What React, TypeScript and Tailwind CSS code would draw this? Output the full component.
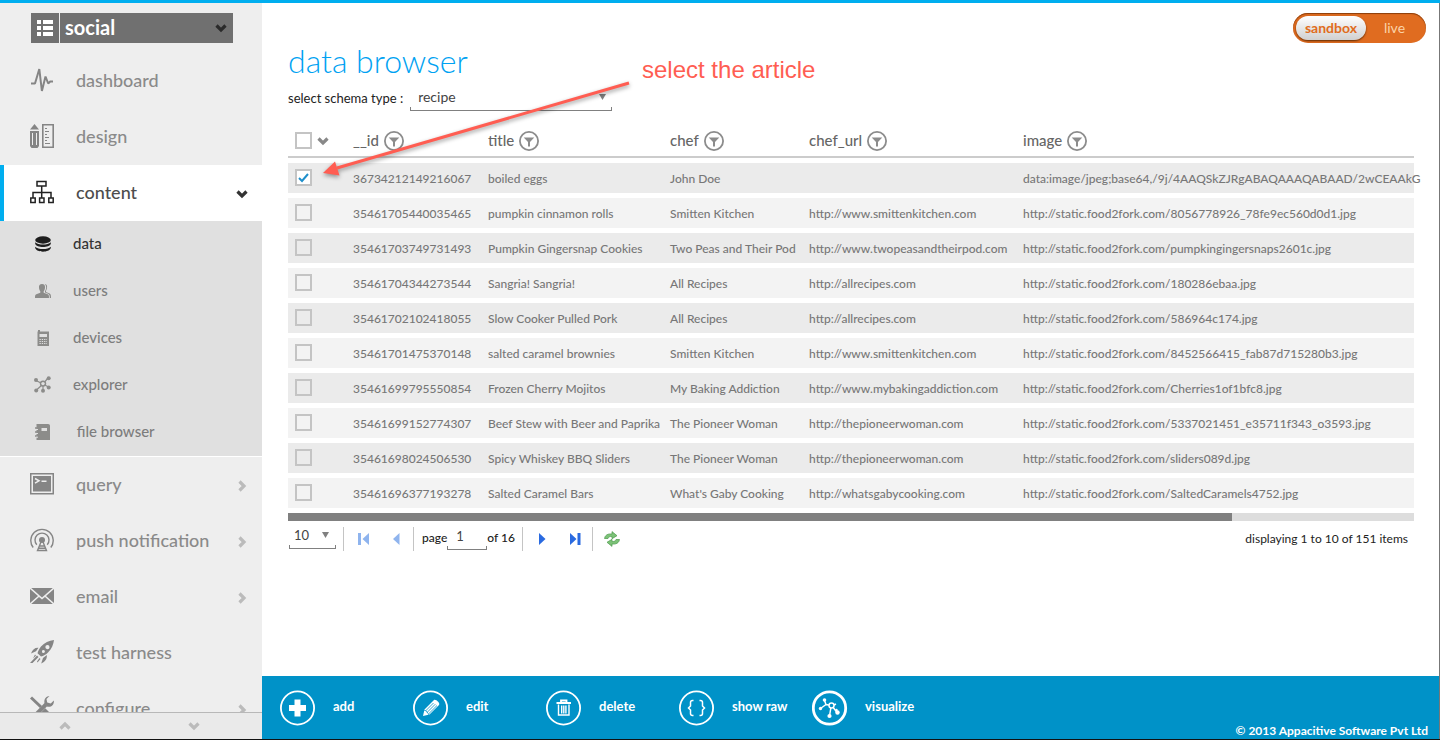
import { useState } from "react";
import type { ReactNode } from "react";
import clsx from "clsx";

interface Recipe {
    id: string;
    title: string;
    chef: string;
    chefUrl: string;
    image: string;
}

const RECIPES: Recipe[] = [
    { id: "36734212149216067", title: "boiled eggs", chef: "John Doe", chefUrl: "", image: "data:image/jpeg;base64,/9j/4AAQSkZJRgABAQAAAQABAAD/2wCEAAkG" },
    { id: "35461705440035465", title: "pumpkin cinnamon rolls", chef: "Smitten Kitchen", chefUrl: "http://www.smittenkitchen.com", image: "http://static.food2fork.com/8056778926_78fe9ec560d0d1.jpg" },
    { id: "35461703749731493", title: "Pumpkin Gingersnap Cookies", chef: "Two Peas and Their Pod", chefUrl: "http://www.twopeasandtheirpod.com", image: "http://static.food2fork.com/pumpkingingersnaps2601c.jpg" },
    { id: "35461704344273544", title: "Sangria! Sangria!", chef: "All Recipes", chefUrl: "http://allrecipes.com", image: "http://static.food2fork.com/180286ebaa.jpg" },
    { id: "35461702102418055", title: "Slow Cooker Pulled Pork", chef: "All Recipes", chefUrl: "http://allrecipes.com", image: "http://static.food2fork.com/586964c174.jpg" },
    { id: "35461701475370148", title: "salted caramel brownies", chef: "Smitten Kitchen", chefUrl: "http://www.smittenkitchen.com", image: "http://static.food2fork.com/8452566415_fab87d715280b3.jpg" },
    { id: "35461699795550854", title: "Frozen Cherry Mojitos", chef: "My Baking Addiction", chefUrl: "http://www.mybakingaddiction.com", image: "http://static.food2fork.com/Cherries1of1bfc8.jpg" },
    { id: "35461699152774307", title: "Beef Stew with Beer and Paprika", chef: "The Pioneer Woman", chefUrl: "http://thepioneerwoman.com", image: "http://static.food2fork.com/5337021451_e35711f343_o3593.jpg" },
    { id: "35461698024506530", title: "Spicy Whiskey BBQ Sliders", chef: "The Pioneer Woman", chefUrl: "http://thepioneerwoman.com", image: "http://static.food2fork.com/sliders089d.jpg" },
    { id: "35461696377193278", title: "Salted Caramel Bars", chef: "What's Gaby Cooking", chefUrl: "http://whatsgabycooking.com", image: "http://static.food2fork.com/SaltedCaramels4752.jpg" },
];

const COLUMNS = ["__id", "title", "chef", "chef_url", "image"];

/* ---------- icons ---------- */

function Chevron({ direction, className }: { direction: "up" | "down" | "right"; className?: string }) {
    const d = {
        up: "M1.5 8.5 6 4l4.5 4.5",
        down: "M1.5 3.5 6 8l4.5-4.5",
        right: "M3.5 1.5 8 6l-4.5 4.5",
    }[direction];
    return (
        <svg width="12" height="12" viewBox="0 0 12 12" className={clsx("shrink-0", className)} aria-hidden="true">
            <path d={d} fill="none" stroke="currentColor" strokeWidth="3.2" />
        </svg>
    );
}

const PulseIcon = () => (
    <svg width="24" height="24" viewBox="0 0 24 24" fill="none" stroke="currentColor" strokeWidth="2" strokeLinejoin="bevel">
        <path d="M1 15.500h4L9.300 1l2.600 22 3.600-14.500 2.700 7 2-2H23" />
    </svg>
);

const DesignIcon = () => (
    <svg width="24" height="24" viewBox="0 0 24 24" fill="currentColor">
        <path d="M4.500 0 9 5.500H0z" />
        <path fillRule="evenodd" d="M0 7h9v15l-1.500 2h-6L0 22zM2 9v12h1V9zm4 0v12h1V9z" />
        <path fillRule="evenodd" d="M12 0h12v24H12zm1.600 1.600v20.800h8.800V1.600z" />
        <path d="M15 4h2v1h-2zm0 3h4v1h-4zm0 3h2v1h-2zm0 3h4v1h-4zm0 3h2v1h-2zm0 3h5v1h-5z" />
    </svg>
);

const TreeIcon = () => (
    <svg width="24" height="24" viewBox="0 0 24 24" fill="none" stroke="currentColor" strokeWidth="1.500">
        <path d="M7 1.500h9v4.500H7z" />
        <path d="M11.700 6v12M3 18v-5.500h18V18" />
        <path d="M.8 18h4.400v4.400H.8zm8.800 0H14v4.400H9.600zm9.200 0h4.400v4.400h-4.400z" />
    </svg>
);

const TerminalIcon = () => (
    <svg width="24" height="22" viewBox="0 0 24 22">
        <path fill="none" stroke="currentColor" strokeWidth="1.500" d="M.75.75h22.500v20H.75z" />
        <path fill="currentColor" d="M3 3h18v15.500H3z" />
        <path fill="none" stroke="#eee" strokeWidth="1.500" d="m5 5.500 4 2.300-4 2.300M11.500 8.300h5" />
    </svg>
);

const AntennaIcon = () => (
    <svg width="24" height="24" viewBox="0 0 24 24" fill="none" stroke="currentColor" strokeWidth="1.400">
        <path d="M3.200 19.500a11.200 11.200 0 1 1 17.600 0" />
        <path d="M6.800 16.800a7 7 0 1 1 10.400 0" />
        <circle cx="12" cy="12" r="3" fill="currentColor" stroke="none" />
        <path d="M11 14 7.500 22.500h9L13 14M9.500 18h5M9 20.300h6" />
    </svg>
);

const MailIcon = () => (
    <svg width="24" height="16" viewBox="0 0 24 16" fill="currentColor">
        <path d="M1.200 0h21.600L12 9.600z" />
        <path d="M0 1v14l8-7zM24 1v14l-8-7z" />
        <path d="m9 9-7.800 7h21.600L15 9l-3 2.600z" />
    </svg>
);

const RocketIcon = () => (
    <svg width="24" height="24" viewBox="0 0 24 24" fill="currentColor">
        <path fillRule="evenodd" d="M24 0c-5 .6-9.500 2.500-13 6.500-1.500 1.800-3 4.500-3.500 6.800l3.500 3.300c2.500-.6 5-2 7-4C21.500 9 23.500 4.500 24 0zm-6.500 5a2.100 2.100 0 1 1-.1 4.200 2.100 2.100 0 0 1 .1-4.200zm-4 5a1.500 1.500 0 1 1-.1 3 1.500 1.500 0 0 1 .1-3z" />
        <path d="M8.500 7.800C5 7.500 2.500 9.500 1 13.500l5-2.200zM16.800 15c.4 4-1.500 6.600-5.600 8.500L13 18z" />
        <path d="m7 15.500 1.500 1.500-6 6H0zM5 14.500l1 1-3 3zM9.500 18l1 1-3 3.500-.5-1z" />
    </svg>
);

const ToolsIcon = () => (
    <svg width="24" height="24" viewBox="0 0 24 24">
        <g stroke="currentColor" fill="none">
            <path strokeWidth="3" d="M1 1.500 11 11" />
            <path strokeWidth="5" d="m13.500 14 8 8" />
            <path strokeWidth="4" d="M16 8.500 3 21.500" />
        </g>
        <path fill="currentColor" d="M19.500 0 16.500 3l.7 3.500 3.600.9 3-3c.6 4-2 7-6.300 6.300l-3-3C13.700 3.300 16 .2 19.500 0z" />
    </svg>
);

const DatabaseIcon = () => (
    <svg width="16" height="16" viewBox="0 0 16 16" fill="currentColor">
        <ellipse cx="8" cy="4" rx="7.800" ry="3.700" />
        <path d="M.2 6.200C3 9.300 13 9.300 15.800 6.200v1.600c-1.300 4.400-14.300 4.400-15.600 0z" />
        <path d="M.2 10.700c2.800 3.100 12.800 3.100 15.600 0v1.400c-1.300 4.800-14.300 4.800-15.600 0z" />
    </svg>
);

const UsersIcon = () => (
    <svg width="16" height="14" viewBox="0 0 16 14" fill="currentColor">
        <path d="M7 0c2.300 0 3.300 1.600 3 4-.2 1.600-.8 2.600-1.300 3.300v1.500l4 1.500c1.200.6 1.300 1.700 1.300 3.700H0c0-2 .1-3.100 1.300-3.700l4-1.500V7.300C4.800 6.600 4.200 5.600 4 4 3.700 1.600 4.700 0 7 0z" />
        <path d="M9.800 0c2.200.2 2.500 2 2.200 4-.2 1.300-.7 2.200-1 2.800v1.300l3.700 1.500c1.200.6 1.300 2.200 1.300 4.400h-1.200c0-2.300-.3-3.500-1.600-4.200L10 8.400V7.200c1.700-2.800 1.600-5.200-.2-7.200z" />
    </svg>
);

const PhoneIcon = () => (
    <svg width="12" height="16" viewBox="0 0 12 16">
        <path fill="currentColor" d="M1 0h2v1.500h9V16H.5V1.500H1z" />
        <path fill="#e0e0e0" d="M2.500 4h7.500v3H2.500z" />
        <path stroke="#e0e0e0" strokeWidth="1" strokeDasharray="1.300 1" d="M2.500 9.500H10M2.500 11.500H10M2.500 13.500H10" />
    </svg>
);

const NetworkIcon = () => (
    <svg width="17" height="17" viewBox="0 0 17 17" fill="currentColor">
        <path fill="none" stroke="currentColor" strokeWidth="1.200" d="M2 4.500 9 8l5-6M9 8l5.500 3M9 8v7M9 8l-7 6.500" />
        <circle cx="9" cy="7.600" r="3.200" />
        <circle cx="9" cy="7.600" r="1.700" fill="#e0e0e0" />
        <circle cx="2" cy="4" r="2" />
        <circle cx="14.700" cy="2.200" r="2" />
        <circle cx="14.700" cy="11.500" r="2" />
        <circle cx="9" cy="14.700" r="2" />
        <circle cx="2.200" cy="14.500" r="2" />
    </svg>
);

const NotebookIcon = () => (
    <svg width="16" height="16" viewBox="0 0 16 16">
        <path fill="currentColor" d="M1.500 0H13c1.300 0 2 .8 2 2v14H1.500z" />
        <path stroke="currentColor" strokeWidth="1.500" d="M0 4h3M0 8h3M0 12h3" />
        <path stroke="#e0e0e0" strokeWidth="1" d="M1 5.500h2M1 9.500h2M1 13.200h2" />
        <path fill="#e0e0e0" d="M6.500 4H12v3H6.500z" />
    </svg>
);

const FilterIcon = () => (
    <svg width="20" height="20" viewBox="0 0 20 20">
        <circle cx="10" cy="10" r="9.100" fill="none" stroke="#8c8c8c" strokeWidth="1.800" />
        <path fill="#8c8c8c" d="M4.700 6.500h10.600L11 11v4.500H9V11z" />
    </svg>
);

function CircleIcon({ children, bold }: { children: ReactNode; bold?: boolean }) {
    return (
        <svg width="36" height="36" viewBox="0 0 36 36" fill="none" stroke="#fff" className="shrink-0" aria-hidden="true">
            <circle cx="17.500" cy="18" r={bold ? 16.2 : 16.6} strokeWidth={bold ? 2.8 : 1.8} />
            {children}
        </svg>
    );
}

/* ---------- sidebar ---------- */

interface NavEntry {
    label: string;
    icon: ReactNode;
    chevron?: "down" | "right";
    active?: boolean;
}

const NAV_TOP: NavEntry[] = [
    { label: "dashboard", icon: <PulseIcon /> },
    { label: "design", icon: <DesignIcon /> },
    { label: "content", icon: <TreeIcon />, chevron: "down", active: true },
];

const NAV_SUB: NavEntry[] = [
    { label: "data", icon: <DatabaseIcon />, active: true },
    { label: "users", icon: <UsersIcon /> },
    { label: "devices", icon: <PhoneIcon /> },
    { label: "explorer", icon: <NetworkIcon /> },
    { label: "\u00a0file browser", icon: <NotebookIcon /> },
];

const NAV_BOTTOM: NavEntry[] = [
    { label: "query", icon: <TerminalIcon />, chevron: "right" },
    { label: "push notification", icon: <AntennaIcon />, chevron: "right" },
    { label: "email", icon: <MailIcon />, chevron: "right" },
    { label: "test harness", icon: <RocketIcon /> },
    { label: "configure", icon: <ToolsIcon />, chevron: "right" },
];

function NavItem({ label, icon, chevron, active }: NavEntry) {
    return (
        <a
            href="#"
            className={clsx(
                "flex h-14 shrink-0 items-center border-l-4 pb-0.5 pl-[26px] pr-[14px] text-lg font-medium",
                active ? "border-[#00aeef] bg-white text-[#4d4d4d]" : "border-transparent text-[#8a8a8a]"
            )}
        >
            <span className={clsx("flex w-[46px] items-center", active ? "text-[#222]" : "text-[#858585]")}>{icon}</span>
            <span className="flex-1">{label}</span>
            {chevron && <Chevron direction={chevron} className={clsx("mt-1", active ? "text-[#333]" : "text-[#bbb]")} />}
        </a>
    );
}

function SubNavItem({ label, icon, active }: NavEntry) {
    return (
        <a
            href="#"
            className={clsx("flex h-[47px] items-center pb-0.5 pl-[34px] text-[15px] font-medium", active ? "text-[#333]" : "text-[#7d7d7d]")}
        >
            <span className={clsx("flex w-[17px] items-center justify-center", active ? "text-[#1d1d1d]" : "text-[#8c8c8a]")}>{icon}</span>
            <span className="ml-[22px]">{label}</span>
        </a>
    );
}

function Sidebar() {
    return (
        <aside className="flex w-[262px] shrink-0 flex-col bg-[#eee]">
            <button type="button" className="mb-[10px] ml-[31px] mr-[29px] mt-[10px] flex h-[30px] shrink-0 text-left text-white">
                <span className="flex h-full w-7 items-center justify-center bg-[#707070]">
                    <svg width="16" height="16" viewBox="0 0 16 16" fill="#fff" aria-hidden="true">
                        <path d="M0 0h4v4H0zm6 0h10v4H6zM0 6h4v4H0zm6 0h10v4H6zM0 12h4v4H0zm6 0h10v4H6z" />
                    </svg>
                </span>
                <span className="ml-px flex h-full flex-1 items-center justify-between bg-[#707070] pl-[5px] pr-[6px]">
                    <span className="pb-0.5 text-[20px] font-bold leading-7">social</span>
                    <Chevron direction="down" className="text-[#2a2a2a]" />
                </span>
            </button>
            <nav className="flex min-h-0 flex-1 flex-col overflow-hidden">
                {NAV_TOP.map((item) => (
                    <NavItem key={item.label} {...item} />
                ))}
                <div className="shrink-0 border-b border-white bg-[#e0e0e0]">
                    {NAV_SUB.map((item) => (
                        <SubNavItem key={item.label} {...item} />
                    ))}
                </div>
                {NAV_BOTTOM.map((item) => (
                    <NavItem key={item.label} {...item} />
                ))}
            </nav>
            <div className="flex h-[27px] shrink-0 border-t border-[#b8b8b8] bg-[#eaeaea] pr-1 text-[#bbb]">
                <button type="button" aria-label="scroll up" className="flex flex-1 items-center justify-center">
                    <Chevron direction="up" />
                </button>
                <button type="button" aria-label="scroll down" className="flex flex-1 items-center justify-center">
                    <Chevron direction="down" />
                </button>
            </div>
        </aside>
    );
}

/* ---------- data grid ---------- */

function Checkbox({ label, checked, onChange }: { label: string; checked: boolean; onChange: () => void }) {
    return (
        <span className="grid size-[17px] shrink-0">
            <input
                type="checkbox"
                aria-label={label}
                checked={checked}
                onChange={onChange}
                className="col-start-1 row-start-1 size-[17px] appearance-none border-2 border-[#c4c4c4] checked:bg-white"
            />
            {checked && (
                <svg viewBox="0 0 17 17" className="pointer-events-none col-start-1 row-start-1 size-[17px]" aria-hidden="true">
                    <path d="m4 9 3 3 6-7" fill="none" stroke="#1e8fcb" strokeWidth="2" />
                </svg>
            )}
        </span>
    );
}

function DataGrid() {
    const [selected, setSelected] = useState<string[]>([RECIPES[0].id]);

    function toggle(id: string) {
        setSelected((prev) => (prev.includes(id) ? prev.filter((x) => x !== id) : [...prev, id]));
    }

    function toggleAll() {
        setSelected((prev) => (prev.length === RECIPES.length ? [] : RECIPES.map((r) => r.id)));
    }

    return (
        <div>
            <table className="w-full table-fixed border-separate border-spacing-x-0 border-spacing-y-[5px] text-left">
                <colgroup>
                    <col className="w-[65px]" />
                    <col className="w-[135px]" />
                    <col className="w-[182px]" />
                    <col className="w-[139px]" />
                    <col className="w-[214px]" />
                    <col />
                </colgroup>
                <thead>
                    <tr className="text-[15px] text-[#666]">
                        <th className="h-9 border-b-2 border-[#ccc] p-0 pl-[7px] pt-[3px]">
                            <span className="flex items-center gap-[5px]">
                                <Checkbox label="select all" checked={selected.length === RECIPES.length} onChange={toggleAll} />
                                <button type="button" aria-label="selection options">
                                    <Chevron direction="down" className="text-[#888]" />
                                </button>
                            </span>
                        </th>
                        {COLUMNS.map((name) => (
                            <th key={name} className="border-b-2 border-[#ccc] p-0 pt-[3px] font-medium">
                                <span className="flex items-center gap-[5px]">
                                    {name}
                                    <button type="button" aria-label={`filter ${name}`}>
                                        <FilterIcon />
                                    </button>
                                </span>
                            </th>
                        ))}
                    </tr>
                </thead>
                <tbody className="text-xs font-medium text-[#777]">
                    {RECIPES.map((r) => (
                        <tr key={r.id} className="whitespace-nowrap odd:bg-[#ebebeb] even:bg-[#f3f3f3]">
                            <td className="h-[30px] p-0 pb-0.5 pl-[7px]">
                                <Checkbox label={`select ${r.title}`} checked={selected.includes(r.id)} onChange={() => toggle(r.id)} />
                            </td>
                            <td className="p-0 pt-0.5">{r.id}</td>
                            <td className="p-0 pt-0.5">{r.title}</td>
                            <td className="p-0 pt-0.5">{r.chef}</td>
                            <td className="p-0 pt-0.5">{r.chefUrl}</td>
                            <td className="p-0 pt-0.5">{r.image}</td>
                        </tr>
                    ))}
                </tbody>
            </table>
            <div className="h-2 bg-[#ddd]">
                <div className="h-full w-[83.8%] bg-[#808080]" />
            </div>
        </div>
    );
}

const DropMark = () => (
    <svg width="7" height="6" viewBox="0 0 7 6" className="pointer-events-none shrink-0" aria-hidden="true">
        <path d="M0 0h7L3.500 6z" fill="#808080" />
    </svg>
);

// Tray-shaped underline used below the selects and the page input
const Tray = () => <div className="h-1 border-x border-b border-[#808080]" />;

const Divider = () => <span className="h-6 w-px bg-[#c4c4c4]" />;

function Pager() {
    return (
        <div className="flex h-[36px] items-center text-xs text-[#222]">
            <div className="ml-px w-[47px] pb-1">
                <div className="flex items-center pl-[5px] pr-[7px]">
                    <select aria-label="rows per page" defaultValue="10" className="h-5 min-w-0 flex-1 appearance-none text-[13px] leading-5 text-[#444]">
                        <option>10</option>
                        <option>20</option>
                        <option>50</option>
                    </select>
                    <DropMark />
                </div>
                <Tray />
            </div>
            <div className="ml-[7px] flex items-center">
                <Divider />
                <div className="flex w-[69px] items-center justify-between pl-[14px] pr-[13px]">
                    <button type="button" aria-label="first page">
                        <svg width="12" height="12" viewBox="0 0 12 12" fill="#8fb4ee">
                            <path d="M0 0h3v12H0zM11 0v12L4.500 6z" />
                        </svg>
                    </button>
                    <button type="button" aria-label="previous page">
                        <svg width="7" height="12" viewBox="0 0 7 12" fill="#8fb4ee">
                            <path d="M6.500 0v12L0 6z" />
                        </svg>
                    </button>
                </div>
                <Divider />
            </div>
            <label htmlFor="page" className="ml-2 pb-[3px] font-medium">page</label>
            <div className="w-10 pb-0.5">
                <input id="page" type="text" defaultValue="1" className="block h-5 w-full pl-[9px] text-[13px] text-[#444] outline-none" />
                <Tray />
            </div>
            <span className="pb-[3px] font-medium">of 16</span>
            <div className="ml-[7px] flex items-center">
                <Divider />
                <div className="flex w-[69px] items-center justify-between pl-[16px] pr-[11px]">
                    <button type="button" aria-label="next page">
                        <svg width="7" height="12" viewBox="0 0 7 12" fill="#2a6ae0">
                            <path d="M0 0v12l6.500-6z" />
                        </svg>
                    </button>
                    <button type="button" aria-label="last page">
                        <svg width="11" height="12" viewBox="0 0 11 12" fill="#2a6ae0">
                            <path d="M0 0v12l6.500-6zM7.500 0h3v12h-3z" />
                        </svg>
                    </button>
                </div>
                <Divider />
            </div>
            <button type="button" aria-label="refresh" className="ml-[11px]">
                <svg width="16" height="16" viewBox="0 0 16 16" fill="#7cc277" stroke="#4a9a4a" strokeWidth="0.700" strokeLinejoin="round">
                    <path d="M.5 7.500C1 4 4 2.500 8 3V.6l5 4.100-5 3V5.600c-2-.3-3.400.2-4 1.900z" />
                    <path d="M15.500 8.500c-.5 3.500-3.500 5-7.500 4.500v2.400l-5-4.100 5-3v2.100c2 .3 3.400-.2 4-1.900z" />
                </svg>
            </button>
            <span className="ml-auto pb-px pr-[6px]">displaying 1 to 10 of 151 items</span>
        </div>
    );
}

/* ---------- bottom bar ---------- */

const ACTIONS: { label: string; icon: ReactNode }[] = [
    {
        label: "add",
        icon: (
            <CircleIcon>
                <path d="M17.500 9.500v17M9 18h17" strokeWidth="6" />
            </CircleIcon>
        ),
    },
    {
        label: "edit",
        icon: (
            <CircleIcon>
                <path d="m10 26 1.500-6.500 9.500-9.500c1.500-1.500 6.500 3 5 5L16.500 24.500z" fill="#fff" stroke="none" />
                <path d="m12.500 21 8-8M14 22.500l8.300-8.300M15.700 23.800l8.300-8.300M11 20c2 .5 4 2.500 4.800 4.800" stroke="#0092c8" strokeWidth="0.800" />
            </CircleIcon>
        ),
    },
    {
        label: "delete",
        icon: (
            <CircleIcon>
                <path d="M10.500 13H25M15 12.500v-2h5.500v2" strokeWidth="1.800" />
                <path d="M12.500 14.500V25H23V14.500M15.700 15.500v8M17.800 15.500v8M19.900 15.500v8" strokeWidth="1.400" />
            </CircleIcon>
        ),
    },
    {
        label: "show raw",
        icon: (
            <CircleIcon>
                <path d="M14.500 10.500h-1c-1.500 0-2 .5-2 2V16l-2 2 2 2v3.500c0 1.500.5 2 2 2h1M20.500 10.500h1c1.500 0 2 .5 2 2V16l2 2-2 2v3.500c0 1.500-.5 2-2 2h-1" strokeWidth="1.500" />
            </CircleIcon>
        ),
    },
    {
        label: "visualize",
        icon: (
            <CircleIcon bold>
                <path d="m12.500 10.500 1.500 4 5.500 1M8.500 18.500 14 14.500M20 16l5.500 7M19 17l-1.500 9M20 16l4-2" strokeWidth="1.500" />
                <circle cx="19.500" cy="15.500" r="2.500" strokeWidth="1.500" fill="#0092c8" />
                <g fill="#fff" stroke="none">
                    <circle cx="12.500" cy="10" r="1.800" />
                    <circle cx="8.500" cy="18.500" r="1.700" />
                    <circle cx="25.500" cy="22.500" r="2.200" />
                    <circle cx="17.500" cy="26" r="2.100" />
                    <circle cx="24.500" cy="20" r="1.200" />
                </g>
            </CircleIcon>
        ),
    },
];

function ActionBar() {
    return (
        <footer className="flex h-[63px] shrink-0 justify-between bg-[#0092c8] text-white">
            <div className="flex pl-[18px]">
                {ACTIONS.map(({ label, icon }) => (
                    <button key={label} type="button" className="flex w-[133px] items-center gap-[17px] text-left text-[13px] font-bold">
                        {icon}
                        <span className="pb-0.5">{label}</span>
                    </button>
                ))}
            </div>
            <p className="self-end pr-[11px] text-xs font-bold leading-[17px]">© 2013 Appacitive Software Pvt Ltd</p>
        </footer>
    );
}

// Callout that points at the first row's checkbox
function Callout() {
    return (
        <>
            <svg width="330" height="110" viewBox="0 0 330 110" className="pointer-events-none absolute left-[315px] top-[75px] drop-shadow-[0_2px_2px_rgba(0,0,0,0.4)]" aria-hidden="true">
                <path d="M314 8 22 93" stroke="#ff5d52" strokeWidth="3" />
                <path d="m8 98 12-11.500 4.500 14z" fill="#ff5d52" />
            </svg>
            <p className="pointer-events-none absolute left-[642px] top-14 font-['Liberation_Sans',sans-serif] text-2xl leading-7 text-[#ff5d52]">select the article</p>
        </>
    );
}

export default function App() {
    return (
        <div className="relative flex h-screen flex-col overflow-hidden border-b border-b-[#111] bg-white font-['Lato',sans-serif]">
            <div className="h-[3px] shrink-0 bg-[#00aeef]" />
            <div className="flex min-h-0 flex-1">
                <Sidebar />
                <div className="flex min-w-0 flex-1 flex-col border-r border-[#777]">
                    <main className="min-h-0 flex-1 overflow-hidden pl-[26px] pr-[25px]">
                        <header className="flex items-start justify-between pt-[10px]">
                            <div>
                                <h1 className="pt-7 text-[32px] font-light leading-10 text-[#00a2f2]">data browser</h1>
                                <div className="flex items-start text-[13px] text-[#222]">
                                    <label htmlFor="schema" className="pt-[7px] leading-5">select schema type :</label>
                                    <div className="ml-[7px] w-[202px] pt-[6px]">
                                        <div className="flex items-center pl-2 pr-[6px]">
                                            <select id="schema" defaultValue="recipe" className="h-5 min-w-0 flex-1 appearance-none text-sm leading-5 text-[#444]">
                                                <option>recipe</option>
                                            </select>
                                            <DropMark />
                                        </div>
                                        <Tray />
                                    </div>
                                </div>
                            </div>
                            <div className="-mr-3 flex h-[30px] rounded-full bg-[#e06c20] p-[3px] text-sm shadow-[inset_0_1px_1px_#8a3d0a]">
                                <button type="button" className="w-[70px] rounded-full bg-gradient-to-b from-white to-[#d0d0d0] pb-px font-bold text-[#e06c20] shadow-[0_1px_2px_#5a2a05]">
                                    sandbox
                                </button>
                                <button type="button" className="w-[57px] pb-px text-[#fbd3a8]">
                                    live
                                </button>
                            </div>
                        </header>
                        <div className="mt-[6px]">
                            <DataGrid />
                            <Pager />
                        </div>
                    </main>
                    <ActionBar />
                </div>
            </div>
            <Callout />
        </div>
    );
}
